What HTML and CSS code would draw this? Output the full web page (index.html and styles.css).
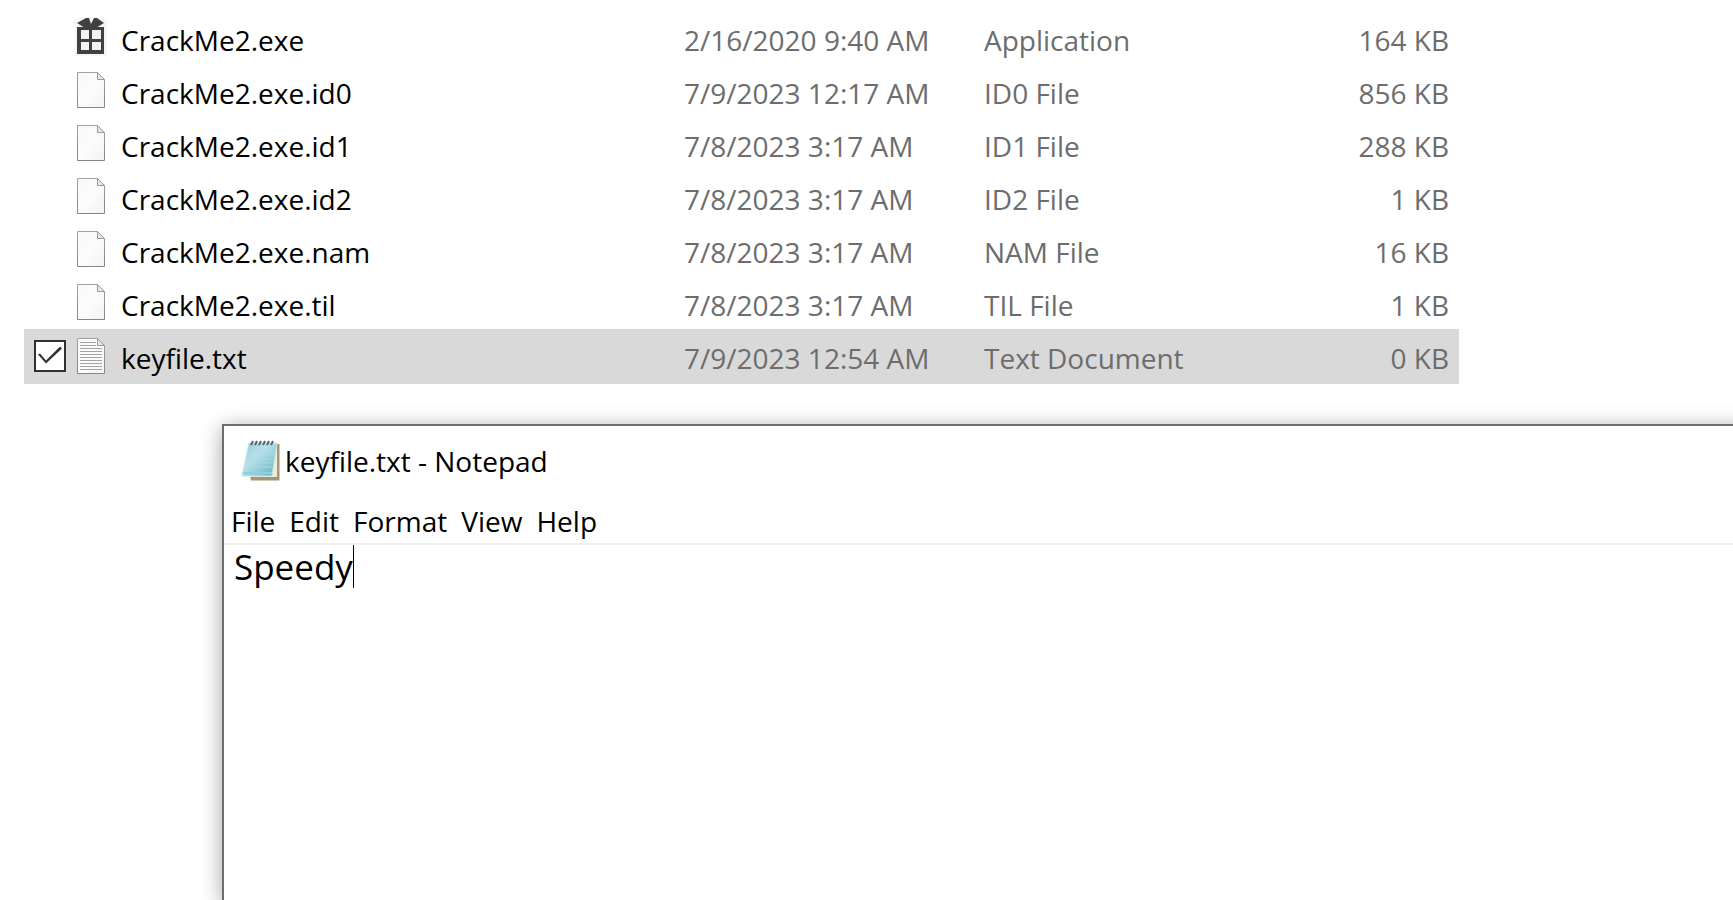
FILE: index.html
```html
<!DOCTYPE html>
<html lang="en">
<head>
<meta charset="utf-8">
<title>keyfile.txt - Notepad</title>
<link rel="stylesheet" href="styles.css">
</head>
<body>
<svg class="defs" width="0" height="0" aria-hidden="true">
  <defs>
    <linearGradient id="paper" x1="0" y1="0" x2="1" y2="1"><stop offset="0" stop-color="#f6f8f9"/><stop offset=".5" stop-color="#fcfcfd"/><stop offset="1" stop-color="#f1f3f5"/></linearGradient>
    <linearGradient id="edge" x1="0" y1="0" x2="0" y2="1"><stop offset="0" stop-color="#a2a2a2"/><stop offset="1" stop-color="#868686"/></linearGradient>
    <linearGradient id="pad" x1="0" y1="0" x2="1" y2="1"><stop offset="0" stop-color="#8fcbd9"/><stop offset=".4" stop-color="#b7e0ea"/><stop offset="1" stop-color="#5fb2c6"/></linearGradient>
    <symbol id="page" viewBox="0 0 28 36">
      <path d="M.5.5H20.5L27.5 7.5V35.5H.5Z" fill="url(#paper)" stroke="url(#edge)"/>
      <path d="M20.5.5V7.5H27.5Z" fill="#e6e6e6" stroke="#9a9a9a"/>
    </symbol>
  </defs>
</svg>
<main class="desktop">
  <table class="files">
    <colgroup><col class="col-check"><col class="col-icon"><col class="col-name"><col class="col-date"><col class="col-type"><col class="col-size"></colgroup>
    <tbody>
      <tr><td></td><td class="icon"><svg width="38" height="40" viewBox="0 0 38 40"><path d="M0 5L8 0H30L37 5L33 8H35V39H3V8Z" fill="#f5f5f5"/><path fill="#414141" d="M5 6L14 1H17L19 7L22 1H25L32 6L24 11H13Z"/><path fill="#414141" d="M5 10H32V37H5Z"/><path fill="#f3f1f4" d="M9 13H17V22H9ZM20 13H29V22H20ZM9 25H17V33H9ZM20 25H29V33H20Z"/></svg></td><td class="name">CrackMe2.exe</td><td>2/16/2020 9:40 AM</td><td>Application</td><td class="size">164 KB</td></tr>
      <tr><td></td><td class="icon"><svg width="28" height="36"><use href="#page"/></svg></td><td class="name">CrackMe2.exe.id0</td><td>7/9/2023 12:17 AM</td><td>ID0 File</td><td class="size">856 KB</td></tr>
      <tr><td></td><td class="icon"><svg width="28" height="36"><use href="#page"/></svg></td><td class="name">CrackMe2.exe.id1</td><td>7/8/2023 3:17 AM</td><td>ID1 File</td><td class="size">288 KB</td></tr>
      <tr><td></td><td class="icon"><svg width="28" height="36"><use href="#page"/></svg></td><td class="name">CrackMe2.exe.id2</td><td>7/8/2023 3:17 AM</td><td>ID2 File</td><td class="size">1 KB</td></tr>
      <tr><td></td><td class="icon"><svg width="28" height="36"><use href="#page"/></svg></td><td class="name">CrackMe2.exe.nam</td><td>7/8/2023 3:17 AM</td><td>NAM File</td><td class="size">16 KB</td></tr>
      <tr><td></td><td class="icon"><svg width="28" height="36"><use href="#page"/></svg></td><td class="name">CrackMe2.exe.til</td><td>7/8/2023 3:17 AM</td><td>TIL File</td><td class="size">1 KB</td></tr>
      <tr class="selected"><td class="check"><input class="tick" type="checkbox" checked aria-labelledby="keyfile"></td><td class="icon"><svg width="28" height="36" viewBox="0 0 28 36"><use href="#page"/><path d="M3 4.500H19M3 7.500H19M3 10.500H25M3 13.500H25M3 16.500H25M3 19.500H25M3 22.500H25M3 25.500H25M3 28.500H25M3 31.500H25" stroke="#a4a4a4"/></svg></td><td class="name" id="keyfile">keyfile.txt</td><td>7/9/2023 12:54 AM</td><td>Text Document</td><td class="size">0 KB</td></tr>
    </tbody>
  </table>
  <section class="notepad" aria-label="Notepad">
    <header class="titlebar">
      <svg width="40" height="42" viewBox="0 0 40 42" aria-hidden="true">
        <path d="M35 4H38.500V40.500H10L9 36H33Z" fill="#a4967a"/>
        <path d="M32 5H36V37H8V35Z" fill="#f3ead3"/>
        <path d="M8 3H36L31 36H1Z" fill="url(#pad)" stroke="#c6e2e8"/>
        <path d="M8 11H33M7 15H33M6 19H32M5 23H31M5 27H31" stroke="#b0dce6" opacity=".8"/>
        <path d="M2 33H31" stroke="#8fd0de" stroke-width="2"/>
        <path d="M10 5L12 1M14 5L16 1M18 5L20 1M22 5L24 1M26 5L28 1M30 5L32 1" stroke="#5b6468" stroke-width="2"/>
      </svg>
      <h1 class="title">keyfile.txt - Notepad</h1>
    </header>
    <nav class="menu"><button>File</button><button>Edit</button><button>Format</button><button>View</button><button>Help</button></nav>
    <div class="editor"><textarea class="text" rows="1" aria-label="Text editor" spellcheck="false">Speedy</textarea><span class="caret"></span></div>
  </section>
</main>
</body>
</html>
```
FILE: styles.css
```css
* { box-sizing: border-box; }
body { margin: 0; background: #fff; color: #000; font: 28px/36px "Open Sans", "Noto Sans", sans-serif; }
.defs { position: absolute; }
.desktop { display: flex; flex-direction: column; min-height: 100vh; padding-top: 11px; overflow: hidden; }
.files { width: calc(100% - 298px); margin-left: 24px; table-layout: fixed; border-collapse: collapse; color: #6d6d6d; }
.files tr { height: 53px; }
.files .selected { height: 55px; background: #d9d9d9; }
.files td { padding: 4px 0 0; white-space: nowrap; }
.files .selected td { padding-top: 2px; }
.files .icon, .files .check, .files .selected .icon, .files .selected .check { padding: 0 0 2px; line-height: 0; }
.files .icon { text-align: center; }
.files .selected .check { padding-left: 10px; }
.files .name { color: #000; padding-left: 11px; }
.files .size { text-align: right; padding-right: 10px; }
.icon svg { vertical-align: middle; }
.col-check { width: 48px; }
.col-icon { width: 38px; }
.col-name { width: 574px; }
.col-date { width: 300px; }
.col-size { width: 150px; }
.tick {
  appearance: none; width: 32px; height: 32px; margin: 0; vertical-align: middle;
  border: 2px solid #303030; background: #fff; display: inline-grid; place-items: center;
}
.tick:checked::before {
  content: ""; width: 24px; height: 18px; background: #303030;
  clip-path: polygon(0 8px, 2px 7px, 8px 14px, 22px 0, 24px 2px, 8px 17px);
}
.notepad {
  flex: 1; margin: 40px -24px 0 222px; background: #fff;
  border: 2px solid #6d6d6d; border-bottom: 0; box-shadow: 0 4px 20px rgba(0, 0, 0, .36);
}
.titlebar { display: flex; align-items: center; height: 70px; padding-left: 17px; gap: 4px; }
.title { margin: 0; font-size: 28px; font-weight: 400; }
.menu { display: flex; align-items: center; gap: 14px; height: 49px; padding-left: 7px; border-bottom: 2px solid #f0f0f0; }
.menu button { padding: 2px 0 0; border: 0; background: none; color: inherit; font: inherit; }
.editor { display: flex; padding-left: 10px; }
.text {
  field-sizing: content; height: 43px; padding: 0; border: 0; outline: 0; resize: none; overflow: hidden;
  font: 500 35px/43px "Open Sans", "Noto Sans", sans-serif; background: none; color: #000;
}
.caret { width: 1px; height: 43px; background: #000; }
```
